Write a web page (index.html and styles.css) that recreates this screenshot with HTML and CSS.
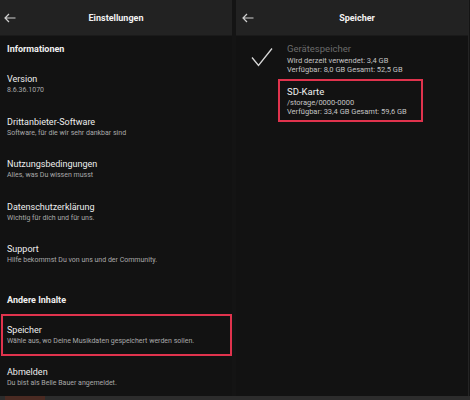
FILE: index.html
```html
<!DOCTYPE html>
<html>
<head>
<meta charset="utf-8">
<link rel="stylesheet" href="styles.css">
</head>
<body>
<div class="screen">
  <section class="panel left">
    <header class="bar">
      <svg class="back" width="12" height="10" viewBox="0 0 12 10"><path d="M11.5 5H1M5 1L1 5l4 4" fill="none" stroke="#cfcfcf" stroke-width="1.2"/></svg>
      <span class="bar-title">Einstellungen</span>
    </header>
    <div class="list">
      <h2 class="sec first">Informationen</h2>
      <div class="item"><div class="t">Version</div><div class="s">8.6.36.1070</div></div>
      <div class="item"><div class="t">Drittanbieter-Software</div><div class="s">Software, für die wir sehr dankbar sind</div></div>
      <div class="item"><div class="t">Nutzungsbedingungen</div><div class="s">Alles, was Du wissen musst</div></div>
      <div class="item"><div class="t">Datenschutzerklärung</div><div class="s">Wichtig für dich und für uns.</div></div>
      <div class="item"><div class="t">Support</div><div class="s">Hilfe bekommst Du von uns und der Community.</div></div>
      <h2 class="sec second">Andere Inhalte</h2>
      <div class="item boxed"><div class="t">Speicher</div><div class="s">Wähle aus, wo Deine Musikdaten gespeichert werden sollen.</div></div>
      <div class="item last"><div class="t">Abmelden</div><div class="s">Du bist als Belle Bauer angemeldet.</div></div>
    </div>
  </section>
  <section class="panel right">
    <header class="bar">
      <svg class="back" width="12" height="10" viewBox="0 0 12 10"><path d="M11.5 5H1M5 1L1 5l4 4" fill="none" stroke="#cfcfcf" stroke-width="1.2"/></svg>
      <span class="bar-title r">Speicher</span>
    </header>
    <div class="store">
      <div class="srow">
        <div class="check"><svg width="22" height="20" viewBox="0 0 22 20"><path d="M1 10.5L7.5 18.5L21 1.5" fill="none" stroke="#d8d8d8" stroke-width="1.3"/></svg></div>
        <div class="sbox">
          <div class="st dim">Gerätespeicher</div>
          <div class="ss">Wird derzeit verwendet: 3,4 GB</div>
          <div class="ss">Verfügbar: 8,0 GB Gesamt: 52,5 GB</div>
        </div>
      </div>
      <div class="srow">
        <div class="check"></div>
        <div class="sbox red">
          <div class="st">SD-Karte</div>
          <div class="ss">/storage/0000-0000</div>
          <div class="ss">Verfügbar: 33,4 GB Gesamt: 59,6 GB</div>
        </div>
      </div>
    </div>
  </section>
</div>
<div class="navstrip"><span class="navred"></span></div>
</body>
</html>
```
FILE: styles.css
```css
html, body {
  margin: 0;
  padding: 0;
  background: #141414;
  width: 470px;
  height: 400px;
  overflow: hidden;
  font-family: Roboto, "Noto Sans", sans-serif;
}
.screen {
  display: flex;
  height: 396px;
}
.panel {
  background: #121212;
  display: flex;
  flex-direction: column;
}
.left { width: 232px; }
.right { width: 232px; margin-left: 4px; border-right: 1px solid #242424; }
.bar {
  height: 36px;
  background: #222222;
  display: flex;
  align-items: center;
  position: relative;
  border-bottom: 1px solid #1a1a1a;
  box-sizing: border-box;
}
.back { margin-left: 4px; }
.right .back { margin-left: 6px; }
.bar-title {
  flex: 1;
  text-align: center;
  color: #f2f2f2;
  font-weight: 700;
  font-size: 9px;
  margin-right: 16px;
  margin-left: 0;
}
.bar-title.r { margin-left: 0; margin-right: 8px; }
.list { padding: 0; }
.sec {
  margin: 0;
  font-size: 9px;
  font-weight: 700;
  color: #f0f0f0;
  line-height: 14px;
  padding-left: 7px;
}
.sec.first { margin-top: 6px; margin-bottom: 17px; }
.sec.second { margin-top: 7px; margin-bottom: 7px; }
.item {
  padding: 0 0 19.5px 7px;
}
.item .t {
  font-size: 9px;
  line-height: 12px;
  color: #eeeeee;
}
.item .s {
  font-size: 7px;
  line-height: 11px;
  color: #a9a9a9;
}
.item.boxed {
  margin-left: 1px;
  width: 231px;
  box-sizing: border-box;
  border: 2px solid #e0334d;
  padding: 8px 4px 7px 4px;
  margin-bottom: 10px;
}
.item.last { padding-bottom: 0; }
.store { padding-top: 6px; }
.srow { display: flex; }
.check {
  width: 42px;
  padding-top: 5px;
  padding-left: 15px;
  box-sizing: border-box;
}
.sbox {
  border: 2px solid transparent;
  padding: 0 7px;
  width: 145px;
  box-sizing: border-box;
}
.sbox.red {
  border-color: #e0334d;
  margin-top: 3px;
  padding: 3.5px 7px 4.5px;
}
.srow:first-child .sbox { margin-top: -2px; }
.srow:first-child .st { margin-bottom: 2px; }
.st {
  font-size: 9.5px;
  line-height: 13px;
  color: #f0f0f0;
}
.st.dim { color: #6b6b6b; }
.ss {
  font-size: 7.5px;
  line-height: 9px;
  color: #c4c4c4;
}
.srow:first-child .ss { line-height: 8.5px; }
.navstrip {
  height: 4px;
  background: #2c2c2c;
  position: relative;
}
.navred {
  display: block;
  width: 40px;
  height: 4px;
  margin-left: 5px;
  background: #4a2a22;
}
```
